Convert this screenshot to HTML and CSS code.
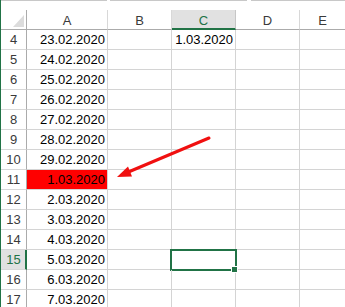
FILE: index.html
```html
<!DOCTYPE html>
<html lang="ru">
<head>
    <meta charset="utf-8" />
    <title>Даты</title>
    <link rel="stylesheet" href="styles.css">
</head>
<body>
<div class="sheet">
    <div class="topbar">
        <span class="seg seg-a"></span>
        <span class="seg seg-b"></span>
        <span class="seg seg-c"></span>
    </div>

    <div class="grid">
        <div class="corner">
            <svg width="26" height="19" viewBox="0 0 26 19">
                <polygon points="12,17 23,17 23,5" fill="#dcdcdc" />
            </svg>
        </div>
        <div class="colhead">A</div>
        <div class="colhead">B</div>
        <div class="colhead active">C</div>
        <div class="colhead">D</div>
        <div class="colhead last">E</div>

        <div class="rowhead">4</div>
        <div class="cell num">23.02.2020</div>
        <div class="cell"></div>
        <div class="cell num">1.03.2020</div>
        <div class="cell"></div>
        <div class="cell last"></div>

        <div class="rowhead">5</div>
        <div class="cell num">24.02.2020</div>
        <div class="cell"></div>
        <div class="cell"></div>
        <div class="cell"></div>
        <div class="cell last"></div>

        <div class="rowhead">6</div>
        <div class="cell num">25.02.2020</div>
        <div class="cell"></div>
        <div class="cell"></div>
        <div class="cell"></div>
        <div class="cell last"></div>

        <div class="rowhead">7</div>
        <div class="cell num">26.02.2020</div>
        <div class="cell"></div>
        <div class="cell"></div>
        <div class="cell"></div>
        <div class="cell last"></div>

        <div class="rowhead">8</div>
        <div class="cell num">27.02.2020</div>
        <div class="cell"></div>
        <div class="cell"></div>
        <div class="cell"></div>
        <div class="cell last"></div>

        <div class="rowhead">9</div>
        <div class="cell num">28.02.2020</div>
        <div class="cell"></div>
        <div class="cell"></div>
        <div class="cell"></div>
        <div class="cell last"></div>

        <div class="rowhead">10</div>
        <div class="cell num">29.02.2020</div>
        <div class="cell"></div>
        <div class="cell"></div>
        <div class="cell"></div>
        <div class="cell last"></div>

        <div class="rowhead">11</div>
        <div class="cell num marked">1.03.2020</div>
        <div class="cell"></div>
        <div class="cell"></div>
        <div class="cell"></div>
        <div class="cell last"></div>

        <div class="rowhead">12</div>
        <div class="cell num">2.03.2020</div>
        <div class="cell"></div>
        <div class="cell"></div>
        <div class="cell"></div>
        <div class="cell last"></div>

        <div class="rowhead">13</div>
        <div class="cell num">3.03.2020</div>
        <div class="cell"></div>
        <div class="cell"></div>
        <div class="cell"></div>
        <div class="cell last"></div>

        <div class="rowhead">14</div>
        <div class="cell num">4.03.2020</div>
        <div class="cell"></div>
        <div class="cell"></div>
        <div class="cell"></div>
        <div class="cell last"></div>

        <div class="rowhead active">15</div>
        <div class="cell num">5.03.2020</div>
        <div class="cell"></div>
        <div class="cell selected"><span class="handle"></span></div>
        <div class="cell"></div>
        <div class="cell last"></div>

        <div class="rowhead">16</div>
        <div class="cell num">6.03.2020</div>
        <div class="cell"></div>
        <div class="cell"></div>
        <div class="cell"></div>
        <div class="cell last"></div>

        <div class="rowhead">17</div>
        <div class="cell num">7.03.2020</div>
        <div class="cell"></div>
        <div class="cell"></div>
        <div class="cell"></div>
        <div class="cell last"></div>
    </div>

    <svg class="arrow" width="345" height="307" viewBox="0 0 345 307">
        <line x1="209" y1="138" x2="126" y2="173" stroke="#f01010" stroke-width="3" stroke-linecap="round" />
        <polygon points="117,177 128,166.5 132,176.5" fill="#f01010" />
    </svg>
</div>
</body>
</html>
```

FILE: styles.css
```css
body {
    margin: 0;
    overflow: hidden;
    background: white;
    font-family: "Liberation Sans", Arial, sans-serif;
    font-size: 13px;
    color: black;
}

.sheet {
    position: relative;
    width: 345px;
    height: 307px;
    border-left: 1px solid #217346;
    box-sizing: border-box;
    overflow: hidden;
}

.topbar {
    display: flex;
    height: 10px;
    margin-left: -1px;
}
.seg {
    height: 1px;
    background: #c8c8c8;
}
.seg-a {
    width: 107px;
}
.seg-b {
    width: 137px;
    margin-left: 3px;
}
.seg-c {
    flex: 1;
    margin-left: 4px;
}

.grid {
    display: grid;
    grid-template-columns: 26px 81px 64px 64px 64px 1fr;
    grid-auto-rows: 20px;
}

.corner,
.colhead,
.rowhead,
.cell {
    box-sizing: border-box;
}

.corner {
    border-right: 1px solid #ababab;
    border-bottom: 1px solid #ababab;
    line-height: 0;
}

.colhead {
    border-right: 1px solid #d8d8d8;
    border-bottom: 1px solid #ababab;
    text-align: center;
    line-height: 21px;
    color: #3a3a3a;
}
.colhead.active {
    background: #e1e1e1;
    color: #217346;
    border-bottom: 2px solid #217346;
    border-right-color: #c6c6c6;
}

.rowhead {
    border-right: 1px solid #ababab;
    border-bottom: 1px solid #d8d8d8;
    text-align: center;
    line-height: 20px;
    color: #3a3a3a;
}
.rowhead.active {
    background: #e1e1e1;
    color: #217346;
    border-right: 2px solid #217346;
    padding-left: 1px;
}

.cell {
    position: relative;
    border-right: 1px solid #d4d4d4;
    border-bottom: 1px solid #d4d4d4;
    line-height: 20px;
    white-space: nowrap;
}
.last {
    border-right: none;
}
.num {
    text-align: right;
    padding-right: 2px;
}
.marked {
    background: #ff0000;
}

.selected::after {
    content: "";
    position: absolute;
    top: -1px;
    left: -2px;
    right: -2px;
    bottom: -2px;
    border: 2px solid #217346;
}
.handle {
    position: absolute;
    right: -3px;
    bottom: -4px;
    width: 5px;
    height: 5px;
    background: #217346;
    border: 1px solid white;
    z-index: 1;
}

.arrow {
    position: absolute;
    top: 0;
    left: -1px;
    pointer-events: none;
}
```
